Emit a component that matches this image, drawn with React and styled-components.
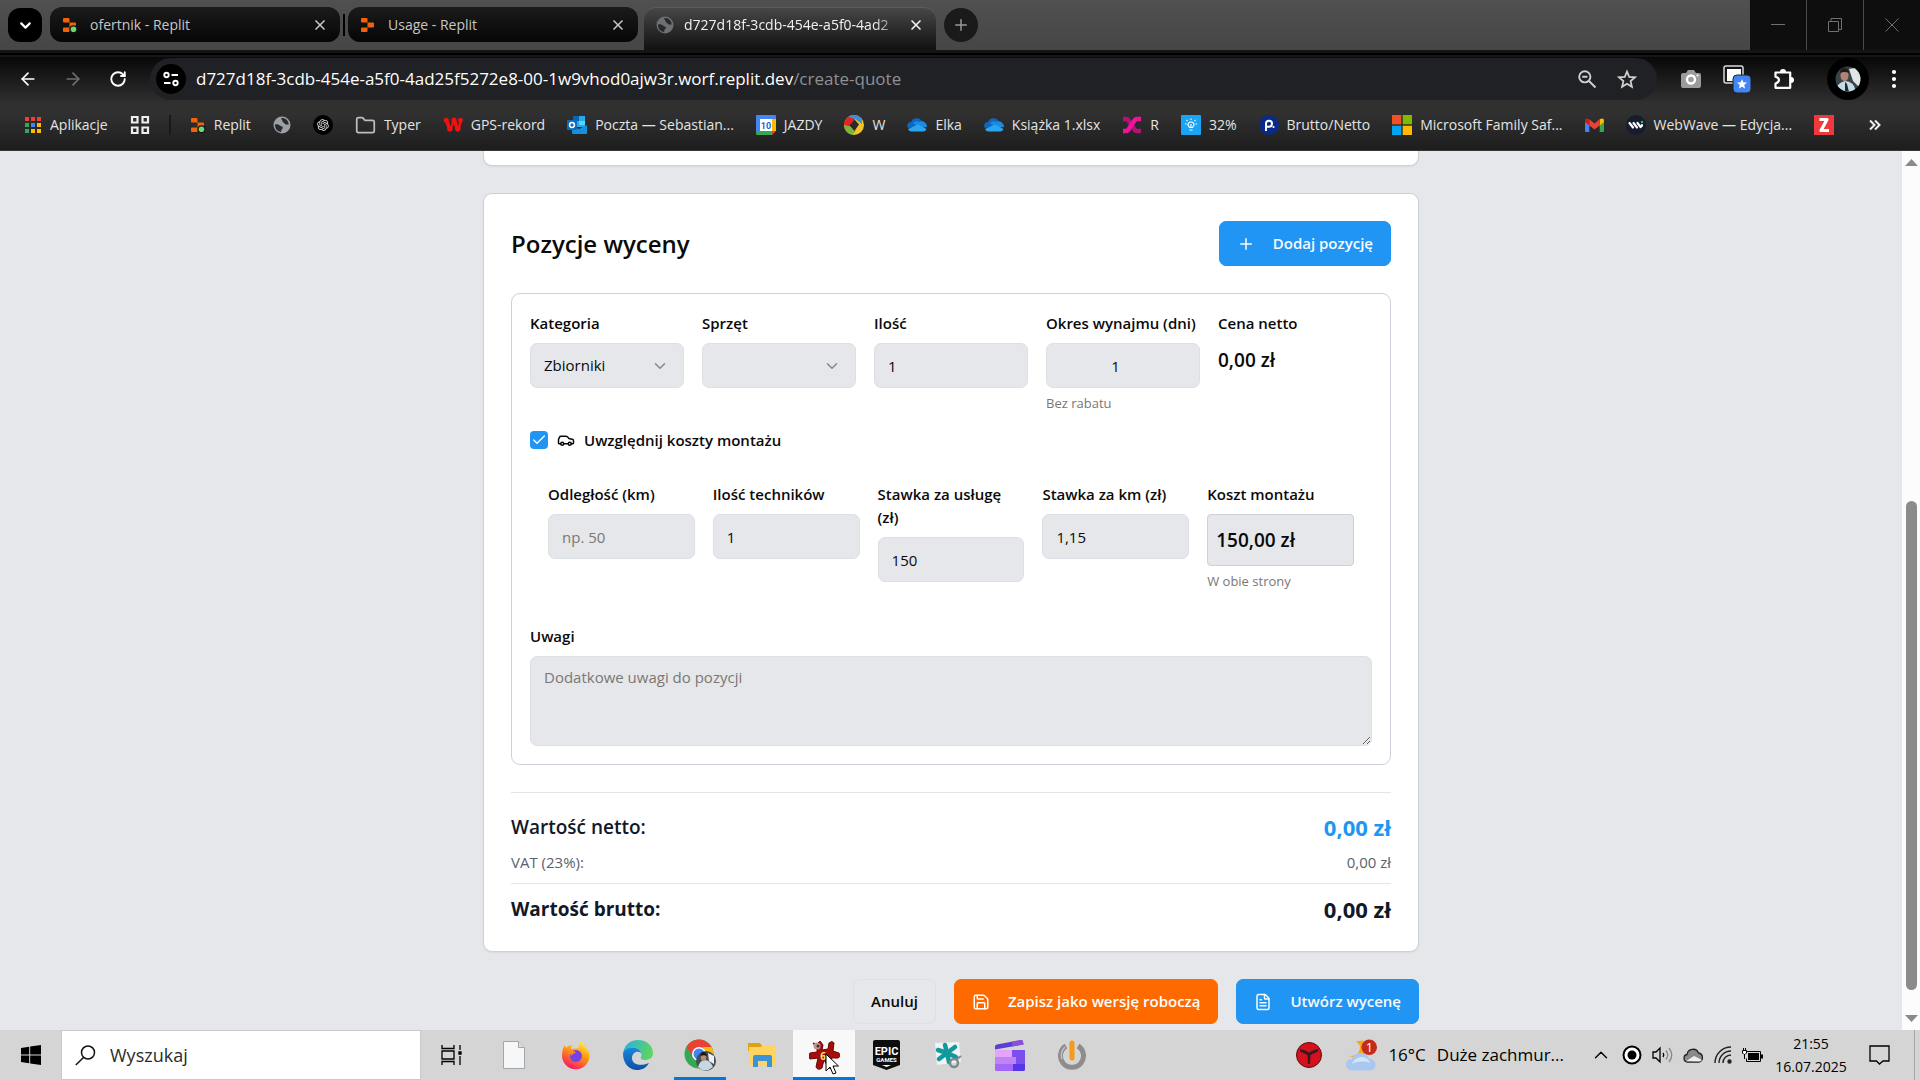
import React from "react";
import styled, { createGlobalStyle, css } from "styled-components";
import {
  ArrowLeft,
  ArrowRight,
  Car,
  Check,
  ChevronDown,
  ChevronUp,
  FileText,
  Folder,
  Plus,
  RotateCw,
  Save,
  X,
} from "lucide-react";
import { RiOpenaiFill } from "react-icons/ri";

const sans = `"Open Sans", "Noto Sans", sans-serif`;

const GlobalStyle = createGlobalStyle`
  * { box-sizing: border-box; }
  body { margin: 0; font-family: ${sans}; background: #e5e7eb; overflow: hidden; }
  button, input, select, textarea { font-family: inherit; }
  svg { display: block; flex: none; }
`;

const Screen = styled.div`
  display: flex;
  flex-direction: column;
  height: 100vh;
`;

/* ---------- browser chrome ---------- */

const TabStrip = styled.div`
  display: flex;
  align-items: flex-start;
  height: 50px;
  padding-left: 8px;
  background: linear-gradient(#505050, #464646);
`;

const TabSearch = styled.button`
  display: grid;
  place-items: center;
  width: 34px;
  height: 34px;
  margin: 8px 8px 0 0;
  padding: 0;
  border: 0;
  border-radius: 12px;
  background: #000;
  color: #fff;
`;

const Tab = styled.div`
  display: flex;
  align-items: center;
  width: ${(p) => (p.$active ? 292 : 290)}px;
  height: ${(p) => (p.$active ? 43 : 35)}px;
  margin-top: 7px;
  padding: 0 12px ${(p) => (p.$active ? 8 : 0)}px 12px;
  border-radius: ${(p) => (p.$active ? "12px 12px 0 0" : "12px")};
  background: ${(p) => (p.$active ? "linear-gradient(#484848, #111)" : "linear-gradient(#1b1b1b, #060606)")};
  color: ${(p) => (p.$active ? "#f1f1f1" : "#c6c6c6")};
  box-shadow: ${(p) => (p.$active ? "inset 0 1px #5c5c5c" : "none")};
`;

const TabTitle = styled.span`
  flex: 1;
  min-width: 0;
  margin-left: ${(p) => (p.$fade ? 10 : 12)}px;
  white-space: nowrap;
  font-size: 14px;
  line-height: 20px;
  ${(p) => p.$fade && css`mask-image: linear-gradient(90deg, #000 85%, transparent 98%);`}
`;

const TabClose = styled.button`
  display: grid;
  place-items: center;
  width: 16px;
  height: 16px;
  padding: 0;
  border: 0;
  background: none;
  color: inherit;
`;

const TabDivider = styled.span`
  width: 2px;
  height: 22px;
  margin: 14px 3px 0;
  background: #000;
`;

const TabSpace = styled.span`
  width: 6px;
`;

const NewTab = styled.button`
  display: grid;
  place-items: center;
  width: 34px;
  height: 34px;
  margin: 8px auto 0 8px;
  padding: 0;
  border: 0;
  border-radius: 50%;
  background: #1a1a1a;
  color: #9a9a9a;
`;

const WindowButton = styled.button`
  display: grid;
  place-items: center;
  width: 57px;
  height: 50px;
  padding: 0;
  border: 0;
  border-left: 1px solid #4a4a4a;
  background: #0e0e0e;
  color: #707070;
`;

const ChromeEdge = styled.div`
  height: 7px;
  background: linear-gradient(#151515 0 3px, #000 3px 5px, #161616 5px);
`;

const ChromeBody = styled.div`
  height: 94px;
  border-bottom: 1px solid #3a3638;
  background: linear-gradient(#080808, #303030 50%, #303030 62%, #1d1d1d);
`;

const Toolbar = styled.div`
  display: flex;
  align-items: center;
  height: 43px;
  color: #fff;
`;

const NavButton = styled.button`
  display: grid;
  place-items: center;
  width: 45px;
  height: 34px;
  padding: 0;
  border: 0;
  background: none;
  color: ${(p) => (p.$muted ? "#6f6f6f" : "#fff")};
`;

const NavGroup = styled.div`
  display: flex;
  padding: 0 10px 0 5px;
`;

const Omnibox = styled.div`
  display: flex;
  flex: 1;
  align-items: center;
  height: 42px;
  padding: 0 20px 0 6px;
  border-radius: 21px;
  background: #202124;
`;

const SiteInfo = styled.button`
  display: grid;
  place-items: center;
  width: 30px;
  height: 30px;
  padding: 0;
  border: 0;
  border-radius: 50%;
  background: #000;
  color: #fff;
`;

const Url = styled.span`
  flex: 1;
  margin-left: 10px;
  font-size: 17px;
  line-height: 24px;
  white-space: nowrap;
  color: #fff;
`;

const UrlPath = styled.span`
  color: #8f9094;
`;

const OmniIcons = styled.div`
  display: flex;
  gap: 20px;
  color: #d0d0d0;
`;

const Extensions = styled.div`
  display: flex;
  align-items: center;
  gap: 22px;
  padding: 0 23px 0 24px;
`;

const Avatar = styled.span`
  display: grid;
  place-items: center;
  width: 42px;
  height: 42px;
  margin-left: 10px;
  border-radius: 50%;
  background: #000;
`;

const Bookmarks = styled.nav`
  display: flex;
  align-items: center;
  gap: 22px;
  height: 50px;
  padding: 0 39px 0 24px;
`;

const Bookmark = styled.a`
  display: flex;
  align-items: center;
  gap: 8px;
  color: #e4e4e4;
  font-size: 14px;
  line-height: 20px;
  text-decoration: none;
  white-space: nowrap;
  &:last-child { margin-left: auto; }
`;

const BookmarkRule = styled.span`
  width: 2px;
  height: 20px;
  margin: 0 -3px;
  background: #191919;
`;

/* ---------- page ---------- */

const Viewport = styled.div`
  display: flex;
  flex: 1;
  min-height: 0;
  background: #e5e7eb;
`;

const Page = styled.main`
  flex: 1;
  overflow: hidden;
`;

const Container = styled.div`
  display: flex;
  flex-direction: column;
  gap: 27px;
  max-width: 936px;
  margin: 0 auto;
`;

const Card = styled.section`
  padding: 27px 27px 26px;
  border: 1px solid #cbd0d9;
  border-radius: 9px;
  background: #fff;
  box-shadow: 0 1px 2px rgba(0, 0, 0, 0.06);
`;

const CardTail = styled(Card)`
  height: 15px;
  padding: 0;
  border-top: 0;
  border-radius: 0 0 9px 9px;
`;

const CardHeader = styled.header`
  display: flex;
  align-items: center;
  justify-content: space-between;
  margin-bottom: 27px;
`;

const Title = styled.h2`
  margin: 0;
  font-size: 24px;
  font-weight: 600;
  line-height: 36px;
  color: #0a0a0a;
`;

const tones = {
  blue: css`border-color: #2095f3; background: #2095f3; color: #f7fbff;`,
  orange: css`border-color: #ff6a00; background: #ff6a00; color: #fff;`,
  plain: css`border-color: #dcdfe4; background: #e5e7eb; color: #0a0a0a;`,
};

const Button = styled.button`
  display: flex;
  align-items: center;
  gap: 18px;
  height: 45px;
  padding: 0 17px;
  border: 1px solid;
  border-radius: 7px;
  font-size: 15px;
  font-weight: 600;
  line-height: 23px;
  white-space: nowrap;
  ${(p) => tones[p.$tone]}
`;

const Panel = styled.div`
  display: flex;
  flex-direction: column;
  padding: 18px;
  border: 1px solid #cbd0d9;
  border-radius: 9px;
`;

const FieldRow = styled.div`
  display: grid;
  grid-template-columns: repeat(5, minmax(0, 1fr));
  gap: 18px;
  align-items: start;
  padding: ${(p) => (p.$inset ? "34px 18px" : "0")};
`;

const Field = styled.div`
  display: flex;
  flex-direction: column;
`;

const Label = styled.label`
  margin-bottom: 8px;
  font-size: 15px;
  font-weight: 600;
  line-height: 23px;
  color: #0a0a0a;
`;

const control = css`
  width: 100%;
  border: 1px solid #dcdfe4;
  border-radius: 7px;
  background: #e5e7eb;
  color: #0a0a0a;
  font-size: 15px;
  line-height: 23px;
  outline: none;
  &::placeholder { color: #7b7773; opacity: 1; }
`;

const Input = styled.input`
  ${control}
  height: 45px;
  padding: 0 13px;
  text-align: ${(p) => (p.$center ? "center" : "left")};
`;

const Textarea = styled.textarea`
  ${control}
  height: 90px;
  padding: 9px 13px;
  resize: vertical;
`;

const SelectBox = styled.div`
  position: relative;
  color: #85878a;
  svg { position: absolute; right: 15px; top: 14px; pointer-events: none; }
`;

const Select = styled.select`
  ${control}
  height: 45px;
  padding: 0 13px;
  appearance: none;
`;

const Hint = styled.span`
  margin-top: 5px;
  font-size: 13px;
  line-height: 20px;
  color: #7b7773;
`;

const Price = styled.output`
  font-size: 19px;
  font-weight: 600;
  line-height: 34px;
  color: #0a0a0a;
`;

const PriceBox = styled(Price)`
  height: 52px;
  padding: 8px 8px;
  border: 1px solid #cbd0d9;
  border-radius: 4px;
  background: #e5e7eb;
`;

const CheckLine = styled.label`
  display: flex;
  align-items: center;
  gap: 9px;
  height: 18px;
  margin-top: 18px;
  font-size: 15px;
  font-weight: 600;
  line-height: 18px;
  color: #0a0a0a;
`;

const CheckBox = styled.span`
  display: grid;
  width: 18px;
  height: 18px;
  place-items: center;
  color: #fff;
  > * { grid-area: 1 / 1; }
  svg { z-index: 1; pointer-events: none; }
`;

const CheckInput = styled.input`
  appearance: none;
  width: 18px;
  height: 18px;
  margin: 0;
  border-radius: 4px;
  background: #2095f3;
`;

const Totals = styled.div`
  margin-top: 27px;
  padding-top: 18px;
  border-top: 1px solid #e4e6e9;
`;

const TotalRow = styled.div`
  display: flex;
  align-items: center;
  justify-content: space-between;
  height: 32px;
  font-size: 19px;
  font-weight: ${(p) => (p.$strong ? 700 : 600)};
  color: #111827;
`;

const VatRow = styled(TotalRow)`
  height: 23px;
  margin: 7px 0 10px;
  font-size: 15px;
  font-weight: 400;
  color: #5a6270;
`;

const GrossRow = styled.div`
  padding-top: 9px;
  border-top: 1px solid #e4e6e9;
`;

const Amount = styled.strong`
  font-size: 22px;
  font-weight: 700;
  color: ${(p) => (p.$accent ? "#2095f3" : "#111827")};
`;

const Actions = styled.div`
  display: flex;
  justify-content: flex-end;
  gap: 18px;
`;

const ScrollTrack = styled.div`
  display: flex;
  flex-direction: column;
  align-items: center;
  width: 18px;
  padding: 8px 0;
  background: #fcfcfc;
  color: #8a8a8a;
`;

const ScrollGap = styled.span`
  flex: ${(p) => p.$size} 0 0;
`;

const ScrollThumb = styled.span`
  flex: 489 0 0;
  width: 11px;
  border-radius: 6px;
  background: #8b8b8b;
`;

/* ---------- taskbar ---------- */

const Taskbar = styled.footer`
  display: flex;
  align-items: center;
  height: 50px;
  background: #d5d5d5;
  color: #000;
`;

const Start = styled.button`
  display: grid;
  place-items: center;
  width: 61px;
  height: 50px;
  padding: 0;
  border: 0;
  background: none;
`;

const SearchBox = styled.label`
  display: flex;
  align-items: center;
  gap: 14px;
  width: 360px;
  height: 50px;
  padding-left: 13px;
  border: 1px solid #c9c9c9;
  background: #fff;
`;

const SearchInput = styled.input`
  flex: 1;
  min-width: 0;
  padding: 0;
  border: 0;
  outline: none;
  background: none;
  font-size: 18px;
  line-height: 26px;
  &::placeholder { color: #2b2b2b; opacity: 1; }
`;

const Apps = styled.div`
  display: flex;
  flex: 1;
`;

const AppButton = styled.button`
  display: grid;
  position: relative;
  place-items: center;
  width: 62px;
  height: 50px;
  padding: 0;
  border: 0;
  background: ${(p) => (p.$active ? "#f8f8f8" : "none")};
  &:first-child { width: 60px; margin-right: 2px; }
  &::after {
    content: "";
    position: absolute;
    bottom: 0;
    left: ${(p) => (p.$active ? 0 : 5)}px;
    right: ${(p) => (p.$active ? 0 : 5)}px;
    height: ${(p) => (p.$active || p.$running ? 3 : 0)}px;
    background: #0078d7;
  }
`;

const Cursor = styled.svg`
  position: absolute;
  left: 32px;
  top: 23px;
  z-index: 2;
`;

const Tray = styled.div`
  display: flex;
  align-items: center;
  height: 50px;
  margin-right: 5px;
  padding-right: 24px;
  border-right: 1px solid #a5a5a5;
`;

const Weather = styled.div`
  display: flex;
  align-items: center;
  gap: 11px;
  margin: 0 26px 0 24px;
  font-size: 17px;
  line-height: 24px;
  white-space: nowrap;
`;

const TrayIcons = styled.div`
  display: flex;
  align-items: center;
  gap: 10px;
`;

const Clock = styled.time`
  width: 94px;
  margin-right: 11px;
  margin-left: 1px;
  font-size: 14px;
  line-height: 23px;
  text-align: center;
`;

/* ---------- drawings ---------- */

const ReplitIcon = ({ dot }) => (
  <svg width="16" height="16" viewBox="0 0 16 16">
    <path fill="#f26207" d="M2 1h4.500q1 0 1 1v3.500H2q-1 0-1-1V2q0-1 1-1ZM7.500 5.500H13q1 0 1 1v3q0 1-1 1H7.500ZM1 11.500q0-1 1-1h5.500V14q0 1-1 1H2q-1 0-1-1Z" />
    {dot && <circle cx="11.500" cy="12.300" r="4" fill="#141414" />}
    {dot && <circle cx="11.500" cy="12.300" r="2.800" fill="#63e06b" />}
  </svg>
);

const GlobeIcon = ({ fill = "#9aa0a6" }) => (
  <svg width="18" height="18" viewBox="0 0 18 18">
    <circle cx="9" cy="9" r="8.500" fill={fill} />
    <path fill="#2a2a2a" d="M2 8.500c2.500-.5 4 .3 5.300 1.300 1 .8 2.600.4 2.600 2 0 1.400-1.700 1.500-1.700 3V16C4.800 15.700 2 13 2 9ZM8 2.200c.3 1.300 1.500 1.500 1.400 2.800C9.300 6.200 11 6.400 11.500 7.400c.7 1.200 2.200.8 4.200 1C15.600 5 13 2.200 9.500 2Z" />
  </svg>
);

const AppsGrid = () => {
  const c = ["#ea4335", "#ea4335", "#ea4335", "#34a853", "#4285f4", "#fbbc04", "#34a853", "#fbbc04", "#fbbc04"];
  return (
    <svg width="18" height="18" viewBox="0 0 18 18">
      {c.map((f, i) => (
        <rect key={i} x={1 + (i % 3) * 6} y={1 + Math.floor(i / 3) * 6} width="4" height="4" fill={f} />
      ))}
    </svg>
  );
};

const SquaresIcon = () => (
  <svg width="20" height="20" viewBox="0 0 20 20" fill="none" stroke="#eee" strokeWidth="2.200">
    <path d="M2 2h5.500v5.500H2ZM12.500 2H18v5.500h-5.500ZM2 12.500h5.500V18H2ZM12.500 12.500H18V18h-5.500Z" />
  </svg>
);

const GptIcon = () => (
  <svg width="20" height="20" viewBox="0 0 20 20">
    <circle cx="10" cy="10" r="10" fill="#000" />
    <g transform="translate(3 3)" color="#e8e8e8"><RiOpenaiFill size={14} /></g>
  </svg>
);

const GpsIcon = () => (
  <svg width="20" height="20" viewBox="0 0 20 20" fill="#f5100f">
    <path d="M1.500 3.200q2-1 3.600.3 1 .8.800 2.400 1 2.500 1.500 5.600Q8.800 9 8.800 6.800 7.800 4.300 9.500 3q2-1 3.500.5.900 1 .6 2.500 1 3 1.300 5.500 1-2 1-4.500-1.500-2-.2-3.500 1.800-1.600 3.500-.1 1.300 1.500.1 3.300-1.300 1.700-1.700 4.800.5 3-1 4.500-2 1.500-3.800 0-1.200-1.500-.7-3.300Q11.500 10 10.500 9q-.5 1.500-.9 3 .6 2.700-.9 4-2 1.500-3.700 0-1.200-1.300-.8-3.100Q3.600 9.800 2.200 7.800.2 6.300.5 4.800.7 3.700 1.500 3.200Z" />
  </svg>
);

const OutlookIcon = () => (
  <svg width="20" height="20" viewBox="0 0 20 20">
    <path fill="#28a8ea" d="M6 1h12v11H6Z" />
    <path fill="#0364b8" d="M6 1h6v5H6Z" />
    <path fill="#50d9ff" d="M12 6h6v4h-6Z" />
    <path fill="#1490df" d="M5 10l7 4 8-4v8q0 1-1 1H6q-1 0-1-1Z" />
    <rect y="5" width="10" height="10" rx="1" fill="#0f6cbd" />
    <circle cx="5" cy="10" r="2.400" fill="none" stroke="#fff" strokeWidth="1.500" />
  </svg>
);

const CalendarIcon = () => (
  <svg width="20" height="20" viewBox="0 0 20 20">
    <path fill="#4285f4" d="M0 1q0-1 1-1h18q1 0 1 1v4H4v11H0Z" />
    <path fill="#fbbc04" d="M16 4h4v12h-4Z" />
    <path fill="#34a853" d="M0 16h16v4H1q-1 0-1-1Z" />
    <path fill="#ea4335" d="M16 16h4l-4 4Z" />
    <path fill="#fff" d="M4 4h12v12H4Z" />
    <text x="10" y="13.500" fontSize="9" fontWeight="700" textAnchor="middle" fill="#1967d2" fontFamily="Roboto">10</text>
  </svg>
);

const RingIcon = () => (
  <svg width="20" height="20" viewBox="0 0 20 20">
    <circle cx="10" cy="10" r="10" fill="#f6c324" />
    <path fill="#e52421" d="M0 10A10 10 0 0 1 8 .2l3 3.800-6 8.500Z" />
    <path fill="#3f8fd0" d="M4 2a10 10 0 0 1 13.500 1.500L18 9l-7-5Z" />
    <path fill="#7cb53b" d="M0 10q1 8 8 9.800L12 16l-7-5Z" />
    <path fill="#2a2a2a" d="m10.500 4.500 4.500 5-4.500 6.500-5-5.500Z" />
  </svg>
);

const CloudIcon = () => (
  <svg width="20" height="14" viewBox="0 0 20 14">
    <path fill="#0d66c2" d="M4 4a6 6 0 0 1 11-.5L9 9 1 10C-1 7 1 4 4 4Z" />
    <path fill="#1b8ae0" d="M12 4c4-2 8 1 8 5l-8 1-6-5c2-2 4-2 6-1Z" />
    <path fill="#2ba6ee" d="M1 11 11 6.500l8.500 4.500q-1 2.500-3.500 2.500H4.500Q2 13.500 1 11Z" />
  </svg>
);

const PinkIcon = () => (
  <svg width="20" height="18" viewBox="0 0 20 18" fill="none" strokeWidth="4.500" strokeLinejoin="round">
    <path stroke="#b0127a" d="M1 3h3q2 0 3.500 3l4 6q1.500 3 3.500 3h4" />
    <path stroke="#f0149a" d="M1 15h3q2 0 3.500-3l4-6Q13 3 15 3h4" />
  </svg>
);

const BulbIcon = () => (
  <svg width="20" height="20" viewBox="0 0 20 20">
    <rect width="20" height="20" rx="1" fill="#1ba4f5" />
    <path fill="none" stroke="#fff" strokeWidth="1.100" d="M8.500 12.500 7 10a3 3 0 0 1 6 0l-1.500 2.500ZM8.500 15h3M10 12V9M10 5V3.500M6.500 6 5.500 5M13.500 6l1-1M5.500 9H4M14.500 9H16" />
  </svg>
);

const RhoIcon = () => (
  <svg width="20" height="20" viewBox="0 0 20 20">
    <circle cx="10" cy="10" r="10" fill="#0a2a88" />
    <path fill="none" stroke="#fff" strokeWidth="2" d="M7 16V8.500a3 3 0 1 1 3 3.200H7.500" />
    <circle cx="14.500" cy="12" r="1.100" fill="#fff" />
  </svg>
);

const MicrosoftIcon = () => (
  <svg width="20" height="20" viewBox="0 0 20 20">
    <path fill="#f25022" d="M0 0h9.300v9.300H0Z" />
    <path fill="#7fba00" d="M10.700 0H20v9.300h-9.300Z" />
    <path fill="#00a4ef" d="M0 10.700h9.300V20H0Z" />
    <path fill="#ffb900" d="M10.700 10.700H20V20h-9.300Z" />
  </svg>
);

const GmailIcon = () => (
  <svg width="19" height="14" viewBox="0 0 19 14">
    <path fill="#4285f4" d="M0 4v9q0 1 1 1h3.300V6Z" />
    <path fill="#34a853" d="M19 4v9q0 1-1 1h-3.300V6Z" />
    <path fill="#fbbc04" d="M14.700 1.300Q19-1 19 2.500V4l-4.300 3.500Z" />
    <path fill="#c5221f" d="M4.300 1.300Q0-1 0 2.500V4l4.300 3.500Z" />
    <path fill="#ea4335" d="m4.300 1.300 5.200 4.200 5.200-4.200v6.200l-5.200 4-5.200-4Z" />
  </svg>
);

const WebWaveIcon = () => (
  <svg width="20" height="20" viewBox="0 0 20 20">
    <circle cx="10" cy="10" r="10" fill="#171c2e" />
    <path fill="none" stroke="#fff" strokeWidth="2.200" strokeLinecap="round" d="m3.500 8 3.500 4.500M7.500 8l3.500 4.500M11.500 8l3 4q1.500-.7 1.500-2" />
    <circle cx="16" cy="7" r="1.200" fill="#22c55e" />
  </svg>
);

const ZIcon = () => (
  <svg width="20" height="20" viewBox="0 0 20 20">
    <path fill="#ee3a3f" d="M0 0h20v20H0Z" />
    <path fill="none" stroke="#fff" strokeWidth="3.200" strokeLinejoin="round" d="M5.500 4.500H13L7 15.500h8" />
  </svg>
);

const RaquoIcon = () => (
  <svg width="12" height="12" viewBox="0 0 12 12" fill="none" stroke="#eee" strokeWidth="2">
    <path d="m1 1.500 4.500 4.500L1 10.500M6 1.500 10.500 6 6 10.500" />
  </svg>
);

const TuneIcon = () => (
  <svg width="18" height="18" viewBox="0 0 18 18" fill="none" stroke="currentColor" strokeWidth="1.900">
    <circle cx="4.500" cy="5" r="2.200" />
    <path d="M9.500 5H16M2 13h6.500" />
    <circle cx="13.500" cy="13" r="2.200" />
  </svg>
);

const ZoomOutIcon = () => (
  <svg width="20" height="20" viewBox="0 0 20 20" fill="none" stroke="currentColor" strokeWidth="1.900">
    <circle cx="7.800" cy="7.800" r="5.600" />
    <path d="m12 12 6.500 6.500M5.200 7.800h5.200" />
  </svg>
);

const StarIcon = () => (
  <svg width="20" height="20" viewBox="0 0 20 20" fill="none" stroke="currentColor" strokeWidth="1.800">
    <path d="m10 2.500 2.200 5.300 5.800.5-4.400 3.800 1.300 5.700-4.900-3-4.900 3 1.300-5.700L2 8.300l5.800-.5Z" />
  </svg>
);

const CameraIcon = () => (
  <svg width="20" height="18" viewBox="0 0 20 18">
    <path fill="#9b9b9b" d="M2 3h3l2-3h6l2 3h3q2 0 2 2v11q0 2-2 2H2q-2 0-2-2V5q0-2 2-2Z" />
    <circle cx="10" cy="9.500" r="4" fill="none" stroke="#fff" strokeWidth="2.400" />
    <circle cx="16.500" cy="5.500" r="1" fill="#fff" />
  </svg>
);

const TabStarIcon = () => (
  <svg width="28" height="28" viewBox="0 0 28 28">
    <rect x="1" y="1" width="19" height="17" rx="2" fill="none" stroke="#d8d8d8" strokeWidth="1.500" />
    <path fill="#fff" d="M4 4h14v12H4Z" />
    <rect x="10" y="10" width="18" height="18" rx="4" fill="#4285f4" stroke="#222" />
    <path fill="#fff" d="m19 14 1.300 3.300 3.700.3-2.800 2.400.9 3.600L19 21.700l-3.100 1.900.9-3.600-2.800-2.400 3.700-.3Z" />
  </svg>
);

const PuzzleIcon = () => (
  <svg width="22" height="22" viewBox="0 0 22 22" fill="none" stroke="#fff" strokeWidth="2.200" strokeLinejoin="round">
    <path d="M2.500 4.500h14.700v15.300H2.500v-4.300q3.500-1 3.500-3.400t-3.500-3.300Z" />
    <path fill="#fff" stroke="none" d="M7 4a3 3 0 0 1 6 0ZM18 9a3 3 0 0 1 0 6Z" />
  </svg>
);

const DotsIcon = () => (
  <svg width="6" height="20" viewBox="0 0 6 20" fill="#fff">
    <circle cx="3" cy="3" r="2.100" /><circle cx="3" cy="10" r="2.100" /><circle cx="3" cy="17" r="2.100" />
  </svg>
);

const FaceIcon = () => (
  <svg width="26" height="26" viewBox="0 0 26 26">
    <defs><clipPath id="face"><circle cx="13" cy="13" r="12.500" /></clipPath></defs>
    <g clipPath="url(#face)">
      <path fill="#39434a" d="M0 0h26v26H0Z" />
      <path fill="#dfe6e8" d="m14 3 12-2v22l-8-8Z" />
      <path fill="#c4dbe6" d="M1 26q0-9 9-11 9 0 11 11Z" />
      <ellipse cx="9.500" cy="9.500" rx="4" ry="5.500" fill="#b08474" />
      <path fill="#231b19" d="M5 7q0-5 4.500-5T14 7Q9.500 5 5 7Z" />
      <path fill="#1f2a38" d="m10 16 2 2 2 8h-4Z" />
    </g>
  </svg>
);

const WindowsLogo = () => (
  <svg width="20" height="20" viewBox="0 0 20 20">
    <path d="M0 3 8.200 1.800v7.700H0ZM9.200 1.600 20 0v9.500H9.200ZM0 10.500h8.200v7.700L0 17ZM9.200 10.500H20V20L9.200 18.400Z" />
  </svg>
);

const SearchGlass = () => (
  <svg width="21" height="21" viewBox="0 0 21 21" fill="none" stroke="#111" strokeWidth="1.500">
    <circle cx="13" cy="7.500" r="6.500" /><path d="M8.500 12.500.8 20" />
  </svg>
);

const TaskViewIcon = () => (
  <svg width="21" height="20" viewBox="0 0 21 20" fill="none" stroke="#000" strokeWidth="1.300">
    <path d="M1 0v3.500h12V0M1 20v-3.500h12V20M1 6h12v8H1ZM19 0v5M19 11v9" />
    <path fill="#000" d="M18 7h2v2h-2Z" />
  </svg>
);

const BlankFile = () => (
  <svg width="22" height="28" viewBox="0 0 22 28">
    <path fill="#f6f7f8" stroke="#a6a6a6" d="M.5.5h15l6 6v21H.5Z" /><path fill="#ddd" stroke="#a6a6a6" d="M15.500.5v6h6" />
  </svg>
);

const FirefoxIcon = () => (
  <svg width="30" height="30" viewBox="0 0 30 30">
    <defs><linearGradient id="ff" x1=".8" y1="0" x2=".3" y2="1"><stop offset="0" stopColor="#fff44f" /><stop offset=".45" stopColor="#ff980e" /><stop offset="1" stopColor="#f5156c" /></linearGradient></defs>
    <path fill="url(#ff)" d="M19 1c3 2 4 4 5 6 3 2 5 6 4.500 10A13.800 13.800 0 0 1 1 16C1 11 2 8 4 5l1 3c2-2 4-3 6-3l-1 4 7-1c1-3 1-5 2-7Z" />
    <circle cx="15" cy="16" r="6" fill="#7542e5" />
    <path fill="#ff8a16" d="M8 12c3-2 6-1 7 1-3 0-4 1-4 3Z" />
  </svg>
);

const EdgeIcon = () => (
  <svg width="30" height="30" viewBox="0 0 30 30">
    <defs>
      <linearGradient id="eg" x1="0" y1=".3" x2="1" y2=".5"><stop offset="0" stopColor="#2ab0e8" /><stop offset="1" stopColor="#5fd65a" /></linearGradient>
      <linearGradient id="eb" x1="0" y1="0" x2="0" y2="1"><stop offset="0" stopColor="#1a86d8" /><stop offset="1" stopColor="#0c4fa8" /></linearGradient>
    </defs>
    <path fill="url(#eg)" d="M0 14C1 5 7 0 15 0c9 0 15 6 15 13 0 5-4 7-8 7-3 0-5-1-4-3 2-5-3-8-7-8-6 0-10 2-11 5Z" />
    <path fill="url(#eb)" d="M0 14c1-5 5-6 10-6 4 0 7 2 8 5-4-3-9 0-9 5 0 6 7 9 17 5-3 5-7 7-12 7C6 30 0 23 0 14Z" />
  </svg>
);

const ChromeIcon = () => (
  <svg width="32" height="32" viewBox="0 0 32 32">
    <circle cx="15" cy="15" r="14.500" fill="#34a853" />
    <path fill="#ea4335" d="M2.500 7.500A14.500 14.500 0 0 1 27.500 8H15l-6 10Z" />
    <path fill="#fbbc04" d="M27.500 8A14.500 14.500 0 0 1 14 29.500L21.500 18 19 8Z" />
    <circle cx="15" cy="15" r="7" fill="#fff" /><circle cx="15" cy="15" r="5.500" fill="#4285f4" />
    <circle cx="22" cy="22" r="10" fill="#454e55" />
    <path fill="#c6d8e4" d="M14 28q2-7 7-7t8 7q-8 7-15 0Z" />
    <ellipse cx="19.500" cy="18.500" rx="2.600" ry="3.500" fill="#b98a78" /><path fill="#1d1716" d="M16.500 17q0-4 3-4t3.500 4q-3-1.500-6.500 0Z" />
    <path fill="#f1f1f1" d="m24 14 6 3v8l-5-3Z" />
  </svg>
);

const ExplorerIcon = () => (
  <svg width="28" height="24" viewBox="0 0 28 24">
    <path fill="#e0a010" d="M0 0h12l2 3v5H0Z" /><path fill="#ffd461" d="M1 4h12l2-2h13v20H1Z" />
    <path fill="#3a93d8" d="M5 24V14q0-2 2-2h15q2 0 2 2v10h-5v-6h-9v6Z" />
  </svg>
);

const RedManIcon = () => (
  <svg width="31" height="30" viewBox="0 0 31 30">
    <path fill="#a60d0b" stroke="#6d0504" d="M8 9 4 3l4 1 3-3 3 4-1 5 6-1 1-6q3-3 5 0l-1 8 6 2q2 4-1 5h-7l3 8q-3 5-6 1l-4-7-2 8q-4 3-6-1l2-9-8 1q-3-3 0-6l7-1Z" />
    <circle cx="8" cy="6" r="3.500" fill="#c98f8b" /><circle cx="9" cy="6" r="1.500" fill="#333" />
    <text x="14" y="20" fontSize="10" fontWeight="700" textAnchor="middle" fill="#ffe96b" fontFamily="Open Sans">6</text>
  </svg>
);

const EpicIcon = () => (
  <svg width="27" height="30" viewBox="0 0 27 30">
    <path fill="#0d0d0d" d="M2 0h23q2 0 2 2v23l-13.500 5L0 25V2q0-2 2-2Z" />
    <text x="13.500" y="15" fontSize="11" fontWeight="700" textAnchor="middle" fill="#fff" fontFamily="Roboto">EPIC</text>
    <text x="13.500" y="22" fontSize="6" fontWeight="700" textAnchor="middle" fill="#fff" fontFamily="Roboto">GAMES</text>
    <path fill="#fff" d="M9 25h9l-4.500 2Z" />
  </svg>
);

const SwirlIcon = () => (
  <svg width="29" height="28" viewBox="0 0 29 28">
    <path fill="#f0f4f4" d="m1 2 24-1 2 20-24 3Z" />
    <path fill="none" stroke="#119a9c" strokeWidth="4.500" strokeLinecap="round" d="M13 12 11 4M13 12l8-6M13 12l9 4M13 12l2 9M13 12l-8 6M13 12 4 9" />
    <circle cx="20" cy="22" r="4" fill="none" stroke="#7d8b90" strokeWidth="2.500" /><path stroke="#7d8b90" strokeWidth="2" d="m22 19 5-4" />
  </svg>
);

const ClipIcon = () => (
  <svg width="30" height="31" viewBox="0 0 30 31">
    <path fill="#5a3fd0" d="M0 6q0-1 2-1.500L26 0q2 0 2 2l.5 2.500L0 9.500Z" />
    <path fill="#8a4fd8" d="m17 1.700 9-1.700q2 0 2 2l.5 2.500L17 6.500Z" />
    <path fill="#7a4fee" d="M0 10h30v19q0 2-2 2H2q-2 0-2-2Z" />
    <path fill="#e5a4fa" d="M0 10h17v7H0Z" /><path fill="#c083f5" d="M10 17h11v7H0v-7Z" /><path fill="#a468f8" d="M0 24h18v7H2q-2 0-2-2Z" /><path fill="#5536e8" d="M18 24h12v5q0 2-2 2H18Z" />
  </svg>
);

const PowerIcon = () => (
  <svg width="28" height="30" viewBox="0 0 28 30" fill="none">
    <path stroke="#8d8d8d" strokeWidth="5" d="M8 6a11.500 11.500 0 1 0 12 0" />
    <path stroke="#c2c2c2" strokeWidth="1.500" d="M7 7a11.500 11.500 0 0 0-3 12" />
    <path stroke="#f59a1b" strokeWidth="5" strokeLinecap="round" d="M14 3v15" />
  </svg>
);

const RedBall = () => (
  <svg width="26" height="26" viewBox="0 0 26 26">
    <circle cx="13" cy="13" r="12.500" fill="#d3121e" stroke="#5c0a10" />
    <path fill="#3a1a1e" d="M4 7q5 .5 9 3.500 4-3 9-3.500v2.500L14.500 13 14 22h-2l-.5-9L4 9.500Z" />
  </svg>
);

const WeatherIcon = () => (
  <svg width="31" height="34" viewBox="0 0 32 34">
    <path fill="#f7a51d" d="M10 3q6 3 4 9t-10 6q8 4 15-2t-2-14Z" />
    <path fill="#a9c8f0" d="M6 33a6 6 0 0 1 0-12q3-7 10-6 6 1 8 6a6 6 0 0 1 1 12Z" />
    <path fill="#d5e5f8" d="M6 26q4-7 10-7t9 6q-9-3-19 1Z" />
    <circle cx="24" cy="9" r="8" fill="#c42b1c" />
    <text x="24" y="14" fontSize="13" textAnchor="middle" fill="#fff" fontFamily="Open Sans">1</text>
  </svg>
);

const RecordIcon = () => (
  <svg width="20" height="20" viewBox="0 0 20 20"><circle cx="10" cy="10" r="8.500" fill="#fff" stroke="#000" strokeWidth="2" /><circle cx="10" cy="10" r="4.500" /></svg>
);

const SoundIcon = () => (
  <svg width="21" height="18" viewBox="0 0 21 18" fill="none" stroke="#000" strokeWidth="1.300">
    <path d="M1 6h3l4-4v14l-4-4H1ZM11 7q1.500 2 0 4" /><path stroke="#888" d="M14 4.500q3.500 4.500 0 9M17 2q5.500 7 0 14" />
  </svg>
);

const TrayCloud = () => (
  <svg width="21" height="15" viewBox="0 0 21 15" stroke="#222" strokeWidth="1.300">
    <path fill="#8a8a8a" d="M4.500 14a3.800 3.800 0 0 1-.5-7.500 6 6 0 0 1 11.500-1.500A4.600 4.600 0 0 1 16 14Z" /><path fill="#eee" stroke="none" d="M3 13.300 11 8l8 4q-1 1.500-3 1.400Z" />
  </svg>
);

const WifiIcon = () => (
  <svg width="18" height="18" viewBox="0 0 18 18" fill="none" stroke="#222" strokeWidth="1.400">
    <path d="M1 17A16 16 0 0 1 17 1M5 17A12 12 0 0 1 17 5M9 17a8 8 0 0 1 8-8" /><circle cx="15.500" cy="15.500" r="1.500" fill="#222" />
  </svg>
);

const BatteryIcon = () => (
  <svg width="21" height="15" viewBox="0 0 21 15">
    <path fill="none" stroke="#000" d="M4 3.500h14.500v10h-14v-3" /><path d="M6 5h11v7H6ZM19 6.500h2v4h-2Z" /><path stroke="#000" fill="#fff" d="M.5 2.500h4V5L3 6.500H2L.5 5ZM1.500 2.500V0M3.500 2.500V0M2.500 6.500V11" />
  </svg>
);

const NoteIcon = () => (
  <svg width="21" height="20" viewBox="0 0 21 20" fill="none" stroke="#000" strokeWidth="1.300"><path d="M1 1h19v15h-6l-3.500 3-3-3H1Z" /></svg>
);

const Triangle = ({ down }) => (
  <svg width="13" height="7" viewBox="0 0 13 7" fill="currentColor"><path d={down ? "M0 0h13L6.500 7Z" : "M0 7h13L6.500 0Z"} /></svg>
);

/* ---------- content ---------- */

const bookmarks = [
  [<AppsGrid />, "Aplikacje"],
  [<SquaresIcon />, "", "Grupy kart"],
  null,
  [<ReplitIcon dot />, "Replit"],
  [<GlobeIcon />, "", "Strona"],
  [<GptIcon />, "", "ChatGPT"],
  [<Folder size={21} color="#bdbdbd" />, "Typer"],
  [<GpsIcon />, "GPS-rekord"],
  [<OutlookIcon />, "Poczta — Sebastian..."],
  [<CalendarIcon />, "JAZDY"],
  [<RingIcon />, "W"],
  [<CloudIcon />, "Elka"],
  [<CloudIcon />, "Książka 1.xlsx"],
  [<PinkIcon />, "R"],
  [<BulbIcon />, "32%"],
  [<RhoIcon />, "Brutto/Netto"],
  [<MicrosoftIcon />, "Microsoft Family Saf..."],
  [<GmailIcon />, "", "Gmail"],
  [<WebWaveIcon />, "WebWave — Edycja..."],
  [<ZIcon />, "", "Z"],
  [<RaquoIcon />, "", "Więcej"],
];

const BrowserTab = ({ icon, title, active }) => (
  <Tab $active={active}>
    {icon}
    <TabTitle $fade={active}>{title}</TabTitle>
    <TabClose aria-label="Zamknij kartę"><X size={16} strokeWidth={2.5} /></TabClose>
  </Tab>
);

const TextField = ({ id, label, hint, ...rest }) => (
  <Field>
    <Label htmlFor={id}>{label}</Label>
    <Input id={id} {...rest} />
    {hint && <Hint>{hint}</Hint>}
  </Field>
);

const SelectField = ({ id, label, options }) => (
  <Field>
    <Label htmlFor={id}>{label}</Label>
    <SelectBox>
      <Select id={id}>
        {options.map((o) => <option key={o}>{o}</option>)}
      </Select>
      <ChevronDown size={18} />
    </SelectBox>
  </Field>
);

export default function App() {
  return (
    <Screen>
      <GlobalStyle />
      <TabStrip>
        <TabSearch aria-label="Szukaj kart"><ChevronDown size={17} strokeWidth={3} /></TabSearch>
        <BrowserTab icon={<ReplitIcon dot />} title="ofertnik - Replit" />
        <TabDivider />
        <BrowserTab icon={<ReplitIcon />} title="Usage - Replit" />
        <TabSpace />
        <BrowserTab active icon={<GlobeIcon fill="#6b7075" />} title="d727d18f-3cdb-454e-a5f0-4ad2" />
        <NewTab aria-label="Nowa karta"><Plus size={18} /></NewTab>
        <WindowButton aria-label="Minimalizuj">
          <svg width="14" height="14" stroke="currentColor"><path d="M0 6.500h14" /></svg>
        </WindowButton>
        <WindowButton aria-label="Przywróć">
          <svg width="14" height="14" stroke="currentColor" fill="none"><path d="M.5 3.500h10v10H.5ZM3 3V.5h10.500v11H11" /></svg>
        </WindowButton>
        <WindowButton aria-label="Zamknij">
          <svg width="14" height="14" stroke="currentColor"><path d="m.5.5 13 13M13.500.5l-13 13" /></svg>
        </WindowButton>
      </TabStrip>
      <ChromeEdge />
      <ChromeBody>
        <Toolbar>
          <NavGroup>
            <NavButton aria-label="Wstecz"><ArrowLeft size={20} /></NavButton>
            <NavButton aria-label="Dalej" $muted><ArrowRight size={20} /></NavButton>
            <NavButton aria-label="Odśwież"><RotateCw size={18} strokeWidth={2.5} /></NavButton>
          </NavGroup>
          <Omnibox>
            <SiteInfo aria-label="Informacje o stronie"><TuneIcon /></SiteInfo>
            <Url>d727d18f-3cdb-454e-a5f0-4ad25f5272e8-00-1w9vhod0ajw3r.worf.replit.dev<UrlPath>/create-quote</UrlPath></Url>
            <OmniIcons><ZoomOutIcon /><StarIcon /></OmniIcons>
          </Omnibox>
          <Extensions>
            <CameraIcon />
            <TabStarIcon />
            <PuzzleIcon />
            <Avatar><FaceIcon /></Avatar>
            <DotsIcon />
          </Extensions>
        </Toolbar>
        <Bookmarks>
          {bookmarks.map((b, i) =>
            b ? (
              <Bookmark key={i} href="#" aria-label={b[2]}>{b[0]}{b[1] && <span>{b[1]}</span>}</Bookmark>
            ) : (
              <BookmarkRule key={i} />
            )
          )}
        </Bookmarks>
      </ChromeBody>

      <Viewport>
        <Page>
          <Container>
            <CardTail />
            <Card>
              <CardHeader>
                <Title>Pozycje wyceny</Title>
                <Button type="button" $tone="blue"><Plus size={18} />Dodaj pozycję</Button>
              </CardHeader>
              <Panel>
                <FieldRow>
                  <SelectField id="kategoria" label="Kategoria" options={["Zbiorniki"]} />
                  <SelectField id="sprzet" label="Sprzęt" options={[""]} />
                  <TextField id="ilosc" label="Ilość" type="number" defaultValue="1" />
                  <TextField id="okres" label="Okres wynajmu (dni)" type="number" defaultValue="1" $center hint="Bez rabatu" />
                  <Field>
                    <Label htmlFor="cena">Cena netto</Label>
                    <Price id="cena">0,00 zł</Price>
                  </Field>
                </FieldRow>
                <CheckLine>
                  <CheckBox>
                    <CheckInput type="checkbox" defaultChecked />
                    <Check size={16} />
                  </CheckBox>
                  <Car size={18} />
                  Uwzględnij koszty montażu
                </CheckLine>
                <FieldRow $inset>
                  <TextField id="odleglosc" label="Odległość (km)" type="number" placeholder="np. 50" />
                  <TextField id="technicy" label="Ilość techników" type="number" defaultValue="1" />
                  <TextField id="usluga" label="Stawka za usługę (zł)" type="number" defaultValue="150" />
                  <TextField id="stawka" label="Stawka za km (zł)" inputMode="decimal" defaultValue="1,15" />
                  <Field>
                    <Label htmlFor="koszt">Koszt montażu</Label>
                    <PriceBox id="koszt">150,00 zł</PriceBox>
                    <Hint>W obie strony</Hint>
                  </Field>
                </FieldRow>
                <Field>
                  <Label htmlFor="uwagi">Uwagi</Label>
                  <Textarea id="uwagi" placeholder="Dodatkowe uwagi do pozycji" />
                </Field>
              </Panel>
              <Totals>
                <TotalRow><span>Wartość netto:</span><Amount $accent>0,00 zł</Amount></TotalRow>
                <VatRow><span>VAT (23%):</span><span>0,00 zł</span></VatRow>
                <GrossRow>
                  <TotalRow $strong><span>Wartość brutto:</span><Amount>0,00 zł</Amount></TotalRow>
                </GrossRow>
              </Totals>
            </Card>
            <Actions>
              <Button type="button" $tone="plain">Anuluj</Button>
              <Button type="button" $tone="orange"><Save size={18} />Zapisz jako wersję roboczą</Button>
              <Button type="button" $tone="blue"><FileText size={18} />Utwórz wycenę</Button>
            </Actions>
          </Container>
        </Page>
        <ScrollTrack>
          <Triangle />
          <ScrollGap $size={335} />
          <ScrollThumb />
          <ScrollGap $size={25} />
          <Triangle down />
        </ScrollTrack>
      </Viewport>

      <Taskbar>
        <Start aria-label="Start"><WindowsLogo /></Start>
        <SearchBox>
          <SearchGlass />
          <SearchInput type="text" placeholder="Wyszukaj" aria-label="Wyszukaj" />
        </SearchBox>
        <Apps>
          <AppButton aria-label="Widok zadań"><TaskViewIcon /></AppButton>
          <AppButton aria-label="Plik"><BlankFile /></AppButton>
          <AppButton aria-label="Firefox"><FirefoxIcon /></AppButton>
          <AppButton aria-label="Edge"><EdgeIcon /></AppButton>
          <AppButton aria-label="Chrome" $running><ChromeIcon /></AppButton>
          <AppButton aria-label="Eksplorator"><ExplorerIcon /></AppButton>
          <AppButton aria-label="Gra" $active>
            <RedManIcon />
            <Cursor width="14" height="22" viewBox="0 0 14 22"><path fill="#fff" stroke="#000" d="M1 1v17l4-4 3 7 3-1-3-7h5.500Z" /></Cursor>
          </AppButton>
          <AppButton aria-label="Epic Games"><EpicIcon /></AppButton>
          <AppButton aria-label="Obrazy"><SwirlIcon /></AppButton>
          <AppButton aria-label="Clipchamp"><ClipIcon /></AppButton>
          <AppButton aria-label="Zasilanie"><PowerIcon /></AppButton>
        </Apps>
        <Tray>
          <RedBall />
          <Weather><WeatherIcon /><span>16°C</span><span>Duże zachmur...</span></Weather>
          <TrayIcons>
            <ChevronUp size={22} strokeWidth={1.5} />
            <RecordIcon />
            <SoundIcon />
            <TrayCloud />
            <WifiIcon />
            <BatteryIcon />
          </TrayIcons>
          <Clock>21:55<br />16.07.2025</Clock>
          <NoteIcon />
        </Tray>
      </Taskbar>
    </Screen>
  );
}
